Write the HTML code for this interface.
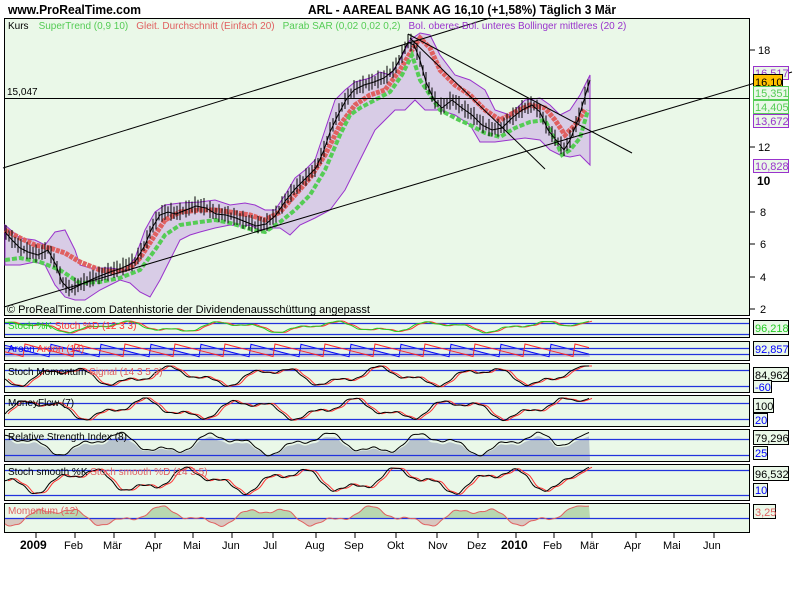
<!DOCTYPE html>
<html><head><meta charset="utf-8"><style>
html,body{margin:0;padding:0;background:#fff;width:800px;height:600px;overflow:hidden}
svg{display:block;font-family:"Liberation Sans",sans-serif}
</style></head><body>
<svg id="s" width="800" height="600" viewBox="0 0 800 600">
<rect width="800" height="600" fill="#fff"/>
<text x="8" y="14" font-size="13" font-weight="bold" fill="#000" textLength="133" lengthAdjust="spacingAndGlyphs">www.ProRealTime.com</text>
<text x="308" y="14" font-size="13" font-weight="bold" fill="#000" textLength="308" lengthAdjust="spacingAndGlyphs">ARL - AAREAL BANK AG    16,10 (+1,58%)    Täglich  3 Mär</text>
<rect x="4.5" y="18.5" width="745" height="297" fill="#eaf8e8" stroke="#000"/>
<polygon fill="#d8cce6" stroke="#9933cc" stroke-width="1" points="5,225 20,238 35,240 45,245 55,232 65,230 75,250 80,265 90,268 110,268 125,270 135,258 145,230 155,212 165,205 180,203 200,202 215,200 230,205 245,203 255,205 265,210 275,210 285,195 295,178 305,170 315,160 325,130 335,100 345,90 355,82 370,78 380,72 390,75 400,60 410,40 420,33 430,35 440,55 455,75 470,80 485,90 495,110 510,115 525,100 540,98 550,105 560,115 570,110 580,95 590,75 590,165 580,155 570,157 560,155 550,150 540,140 525,138 510,140 495,142 480,142 470,125 455,115 440,110 425,110 415,100 405,110 395,110 385,120 375,130 365,150 355,170 345,190 330,210 315,218 300,225 290,235 280,228 270,228 260,230 250,225 240,226 230,225 215,228 200,232 190,235 180,240 170,260 160,280 150,297 140,292 130,283 120,280 110,285 100,290 85,300 75,300 65,297 55,285 45,265 35,262 20,265 5,265"/>
<polyline fill="none" stroke="#e06060" stroke-width="5" stroke-dasharray="4,1" points="5,230 20,238 35,245 50,248 65,253 80,262 100,270 115,272 130,268 140,258 155,235 165,220 180,212 200,210 215,210 230,212 250,215 265,220 280,212 295,195 310,178 325,155 340,125 355,105 370,95 385,90 400,70 412,50 420,38 430,48 440,70 455,85 470,95 485,110 500,120 515,112 530,105 545,108 555,120 565,135 575,125 585,110"/>
<polyline fill="none" stroke="#55cc55" stroke-width="4" stroke-dasharray="5,2" points="5,260 20,258 40,262 60,270 80,283 100,282 120,278 140,270 155,250 165,235 180,225 200,222 215,220 230,223 250,229 265,232 280,222 295,210 310,195 325,170 340,135 350,115 360,108 375,100 390,92 402,75 412,55 420,80 430,95 440,110 455,118 470,125 485,133 500,137 515,128 530,122 545,120 555,140 562,155 570,150 580,138 588,110"/>
<g id="bars"></g>
<polyline id="price" fill="none" stroke="#000" stroke-width="1" points="5,232 12,240 20,248 28,252 38,255 48,250 56,265 62,282 70,290 82,284 95,278 110,272 122,268 135,262 145,245 152,228 160,215 168,212 176,214 186,210 196,206 206,208 216,214 226,215 236,218 246,222 256,226 266,224 276,215 286,200 296,188 306,178 316,168 324,150 330,132 338,115 346,100 354,90 364,85 374,82 384,78 394,70 402,55 408,42 414,45 420,60 426,82 434,100 442,108 452,100 462,108 472,115 482,125 492,130 502,128 512,118 522,110 532,105 540,112 548,130 556,140 564,150 570,140 578,120 584,100 590,80"/>
<line x1="3" y1="168" x2="490" y2="18" stroke="#000"/>
<line x1="4" y1="307" x2="792" y2="72" stroke="#000"/>
<line x1="5" y1="98.5" x2="750" y2="98.5" stroke="#000"/>
<line x1="408" y1="34" x2="632" y2="153" stroke="#000"/>
<line x1="410" y1="38" x2="545" y2="169" stroke="#000"/>
<text x="7" y="95" font-size="10">15,047</text>
<text x="8" y="29" font-size="10"><tspan fill="#000">Kurs</tspan><tspan fill="#55cc55" dx="10">SuperTrend (0,9 10)</tspan><tspan fill="#e06060" dx="8">Gleit. Durchschnitt (Einfach 20)</tspan><tspan fill="#55cc55" dx="8">Parab SAR (0,02 0,02 0,2)</tspan><tspan fill="#9933cc" dx="8">Bol. oberes Bol. unteres Bollinger mittleres (20 2)</tspan></text>
<text x="7" y="313" font-size="11">© ProRealTime.com  Datenhistorie der Dividendenausschüttung angepasst</text>
<g font-size="11" fill="#000">
<line x1="750" y1="50" x2="755" y2="50" stroke="#000"/><text x="758" y="54">18</text>
<line x1="750" y1="147" x2="755" y2="147" stroke="#000"/><text x="758" y="151">12</text>
<text x="757" y="185" font-weight="bold" font-size="12">10</text>
<line x1="750" y1="212" x2="755" y2="212" stroke="#000"/><text x="760" y="216">8</text>
<line x1="750" y1="244" x2="755" y2="244" stroke="#000"/><text x="760" y="248">6</text>
<line x1="750" y1="277" x2="755" y2="277" stroke="#000"/><text x="760" y="281">4</text>
<line x1="750" y1="309" x2="755" y2="309" stroke="#000"/><text x="760" y="313">2</text>
</g>
<g font-size="11">
<rect x="753.5" y="66.5" width="35" height="13" fill="#eaf8e8" stroke="#9933cc"/><text x="755" y="77" fill="#9933cc">16,517</text>
<rect x="753.5" y="74.5" width="29" height="14" fill="#ffc000" stroke="#000"/><text x="755" y="86" fill="#000">16,10</text>
<rect x="753.5" y="86.5" width="35" height="13" fill="#eaf8e8" stroke="#55cc55"/><text x="755" y="97" fill="#55cc55">15,351</text>
<rect x="753.5" y="100.5" width="35" height="13" fill="#eaf8e8" stroke="#55cc55"/><text x="755" y="111" fill="#55cc55">14,405</text>
<rect x="753.5" y="114.5" width="35" height="13" fill="#eaf8e8" stroke="#9933cc"/><text x="755" y="125" fill="#9933cc">13,672</text>
<rect x="753.5" y="159.5" width="35" height="13" fill="#eaf8e8" stroke="#9933cc"/><text x="755" y="170" fill="#9933cc">10,828</text>
</g>
<g id="subs"></g>
<g font-size="11" fill="#000">
<text x="20" y="549" font-weight="bold" font-size="12">2009</text>
<text x="64" y="549">Feb</text><text x="103" y="549">Mär</text><text x="145" y="549">Apr</text><text x="183" y="549">Mai</text><text x="222" y="549">Jun</text><text x="263" y="549">Jul</text><text x="305" y="549">Aug</text><text x="344" y="549">Sep</text><text x="387" y="549">Okt</text><text x="428" y="549">Nov</text><text x="467" y="549">Dez</text>
<text x="501" y="549" font-weight="bold" font-size="12">2010</text>
<text x="543" y="549">Feb</text><text x="580" y="549">Mär</text><text x="624" y="549">Apr</text><text x="663" y="549">Mai</text><text x="703" y="549">Jun</text>
</g>
<g stroke="#000"><line x1="36" y1="533" x2="36" y2="538"/><line x1="75" y1="533" x2="75" y2="538"/><line x1="114" y1="533" x2="114" y2="538"/><line x1="155" y1="533" x2="155" y2="538"/><line x1="193" y1="533" x2="193" y2="538"/><line x1="232" y1="533" x2="232" y2="538"/><line x1="273" y1="533" x2="273" y2="538"/><line x1="316" y1="533" x2="316" y2="538"/><line x1="355" y1="533" x2="355" y2="538"/><line x1="396" y1="533" x2="396" y2="538"/><line x1="437" y1="533" x2="437" y2="538"/><line x1="478" y1="533" x2="478" y2="538"/><line x1="516" y1="533" x2="516" y2="538"/><line x1="554" y1="533" x2="554" y2="538"/><line x1="592" y1="533" x2="592" y2="538"/><line x1="636" y1="533" x2="636" y2="538"/><line x1="674" y1="533" x2="674" y2="538"/><line x1="714" y1="533" x2="714" y2="538"/></g>
<g id="labels" font-size="11">
<text x="8" y="329" fill="#22cc22" font-size="10">Stoch %K <tspan fill="#ff3333">Stoch %D (12 3 3)</tspan></text>
<text x="8" y="352" fill="#0000ff" font-size="10">Aroon <tspan fill="#ff3333">Aroon (14)</tspan></text>
<text x="8" y="375" fill="#000" font-size="10">Stoch Momentum <tspan fill="#e06060">Signal (14 3 5 3)</tspan></text>
<text x="8" y="406" fill="#000" font-size="10">MoneyFlow (7)</text>
<text x="8" y="440" fill="#000" font-size="10">Relative Strength Index (8)</text>
<text x="8" y="475" fill="#000" font-size="10">Stoch smooth %K <tspan fill="#e06060">Stoch smooth %D (14 3 5)</tspan></text>
<text x="8" y="514" fill="#e06060" font-size="10">Momentum (12)</text>
<rect x="753.5" y="320.5" width="35" height="14" fill="#eaf8e8" stroke="#000"/><text x="755" y="332" fill="#22cc22">96,218</text>
<rect x="753.5" y="341.5" width="35" height="14" fill="#eaf8e8" stroke="#000"/><text x="755" y="353" fill="#0000ff">92,857</text>
<rect x="753.5" y="367.5" width="35" height="14" fill="#eaf8e8" stroke="#000"/><text x="755" y="379" fill="#000">84,962</text>
<rect x="753.5" y="380.5" width="18" height="12" fill="#eaf8e8" stroke="#000"/><text x="755" y="391" fill="#0000ff">-60</text>
<rect x="753.5" y="398.5" width="20" height="14" fill="#eaf8e8" stroke="#000"/><text x="755" y="410" fill="#000">100</text>
<rect x="753.5" y="413.5" width="14" height="13" fill="#eaf8e8" stroke="#000"/><text x="755" y="424" fill="#0000ff">20</text>
<rect x="753.5" y="430.5" width="35" height="14" fill="#eaf8e8" stroke="#000"/><text x="755" y="442" fill="#000">79,296</text>
<rect x="753.5" y="446.5" width="14" height="13" fill="#eaf8e8" stroke="#000"/><text x="755" y="457" fill="#0000ff">25</text>
<rect x="753.5" y="466.5" width="35" height="14" fill="#eaf8e8" stroke="#000"/><text x="755" y="478" fill="#000">96,532</text>
<rect x="753.5" y="483.5" width="14" height="13" fill="#eaf8e8" stroke="#000"/><text x="755" y="494" fill="#0000ff">10</text>
<rect x="753.5" y="504.5" width="22" height="14" fill="#eaf8e8" stroke="#000"/><text x="755" y="516" fill="#e06060">3,25</text>
</g>
</svg>
<script>
var NS="http://www.w3.org/2000/svg",subs=document.getElementById('subs');
function el(t,a,par){var e=document.createElementNS(NS,t);for(var k in a)e.setAttribute(k,a[k]);(par||subs).appendChild(e);return e;}
// price bars
var pp=document.getElementById('price').getAttribute('points').split(' ').map(function(s){return s.split(',').map(Number)});
var bars=document.getElementById('bars');
for(var x=6;x<590;x+=3){for(var j=0;j<pp.length-1&&pp[j+1][0]<x;j++);var a=pp[j],b=pp[j+1]||a;var y=a[1]+(b[1]-a[1])*((x-a[0])/((b[0]-a[0])||1));var h=4+6*Math.abs(Math.sin(x*1.7));el('line',{x1:x,y1:y-h,x2:x,y2:y+h*0.8,stroke:'#000','stroke-width':1},bars);}
function ser(s,amp){var p=[];for(var x=5;x<=590;x+=2){var v=0.55+0.3*Math.sin(x*0.06+s)+0.15*Math.sin(x*0.15+2*s)+0.03*Math.sin(x*0.5+3*s)*amp;if(x>555)v=v+(x-555)/35*(1.0-v);p.push([x,Math.max(0,Math.min(1,v))]);}return p;}
function pts(p,t,b){return p.map(function(q){return q[0]+','+(b-(b-t)*q[1]).toFixed(1)}).join(' ');}
var panels=[[318,337,[323,334]],[341,360,[348,354]],[363,392,[370,386]],[395,426,[403,419]],[429,461,[439,455]],[464,500,[470,495]],[503,532,[518]]];
panels.forEach(function(P,i){
 var t=P[0],b=P[1];
 el('rect',{x:4.5,y:t+.5,width:745,height:b-t,fill:'#eaf8e8',stroke:'#000'});
 var p=ser(i*1.7+0.5,1);var tt=t+3,bb=b-3;
 if(i==4){el('polygon',{points:'5,'+b+' '+pts(p,tt+4,bb)+' 590,'+b,fill:'#b8c4cc'});}
 if(i==6){var y0=518;var up=p.map(function(q){var y=bb-(bb-tt)*q[1];return q[0]+','+Math.min(y,y0).toFixed(1)}).join(' ');var dn=p.map(function(q){var y=bb-(bb-tt)*q[1];return q[0]+','+Math.max(y,y0).toFixed(1)}).join(' ');
  el('polygon',{points:'5,518 '+up+' 590,518',fill:'#b8d8b0'});el('polygon',{points:'5,518 '+dn+' 590,518',fill:'#d8c8c0'});}
 if(i==1){var q=[],r=[];for(var x=5;x<=590;x+=2){var ph=(x%50)/50,ph2=((x+25)%50)/50;q.push([x,1-ph]);r.push([x,1-ph2]);}
  el('polygon',{points:'5,'+bb+' '+pts(q,tt,bb)+' 590,'+bb,fill:'#c8cce0'});
  el('polyline',{points:pts(q,tt,bb),fill:'none',stroke:'#0000ff'});
  P[2].forEach(function(y){el('line',{x1:5,y1:y+.5,x2:749,y2:y+.5,stroke:'#2233dd','stroke-width':1.3});});
  el('polyline',{points:pts(r,tt,bb),fill:'none',stroke:'#ff2222'});return;}
 P[2].forEach(function(y){el('line',{x1:5,y1:y+.5,x2:749,y2:y+.5,stroke:'#2233dd','stroke-width':1.3});});
 var c1=(i==0)?'#22cc22':'#000',c2=(i==6||i==4)?null:'#ff3333';
 if(c2){var p2=p.map(function(q){return [q[0]+3,q[1]]});el('polyline',{points:pts(p2,tt,bb),fill:'none',stroke:c2});}
 el('polyline',{points:pts(p,tt,bb),fill:'none',stroke:(i==6?'#e06060':c1)});
});
</script>
</body></html>
